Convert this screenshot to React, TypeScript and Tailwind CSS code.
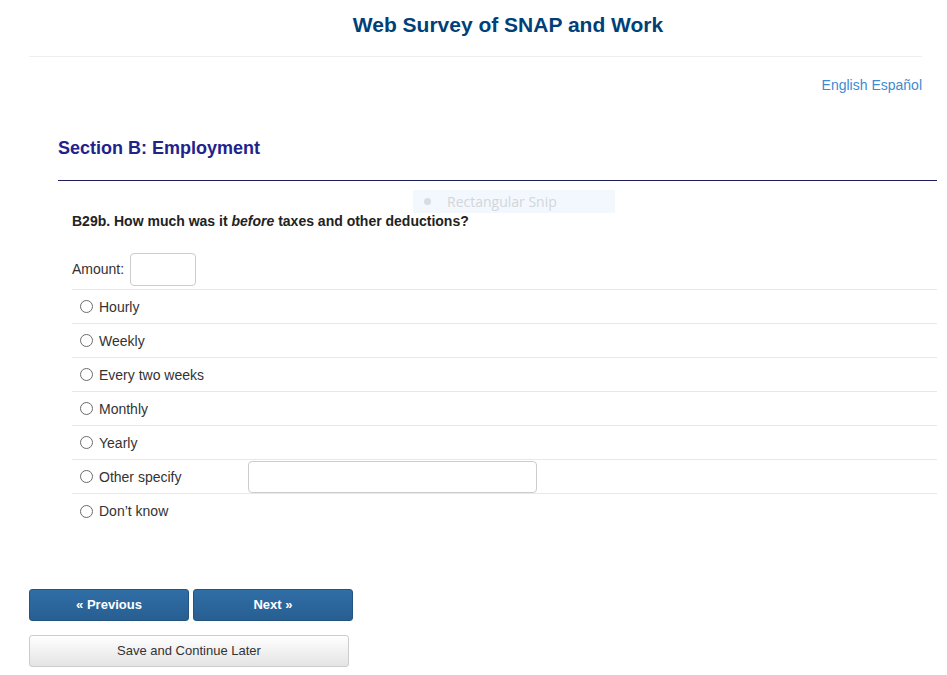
const options = ["Hourly", "Weekly", "Every two weeks", "Monthly", "Yearly", "Other specify", "Don’t know"];

function Radio() {
  return <span className="inline-block w-[13px] h-[13px] rounded-full border border-[#6b6b6b] bg-white shrink-0" />;
}

export default function App() {
  return (
    <div className="relative min-h-[675px] bg-white text-[14px] text-[#333] font-['Liberation_Sans',Arial,sans-serif]">
      {/* Header */}
      <div className="pl-[69px] pt-[11px] text-center">
        <h1 className="text-[21px] leading-[28px] font-bold text-[#003f78]">Web Survey of SNAP and Work</h1>
      </div>
      <div className="mx-[29px] mt-[17px] mr-[25px] border-t border-[#eeeeee]" />

      <div className="mr-[25px] mt-[18px] text-right leading-[20px] text-[#3f8ad0]">
        <a href="#">English</a> <a href="#">Español</a>
      </div>

      {/* Section */}
      <div className="ml-[58px] mr-[10px] mt-[41px]">
        <h2 className="text-[18px] leading-[24px] font-bold text-[#22228c]">Section B: Employment</h2>
        <div className="mt-[20px] border-t border-[#1e1e5a]" />

        <div className="ml-[14px] mt-[30px]">
          <p className="font-bold text-[#222] leading-[20px]">
            B29b. How much was it <em>before</em> taxes and other deductions?
          </p>

          <div className="mt-[22px] flex items-center h-[37px] pb-[4px] border-b border-[#e8e8e8]">
            <span className="leading-[20px]">Amount:</span>
            <input className="ml-[6px] w-[66px] h-[33px] rounded-[4px] border border-[#cccccc] bg-white" />
          </div>

          {options.map((o, i) => (
            <div
              key={o}
              className={`flex items-center h-[34px] pl-[8px] ${i < options.length - 1 ? "border-b border-[#e8e8e8]" : ""}`}
            >
              <Radio />
              <span className="ml-[6px] leading-[20px] w-[149px]">{o}</span>
              {o === "Other specify" && (
                <input className="w-[289px] h-[32px] rounded-[4px] border border-[#cccccc] bg-white" />
              )}
            </div>
          ))}
        </div>
      </div>

      {/* Buttons */}
      <div className="ml-[29px] mt-[61px] flex gap-[4px]">
        <button className="w-[160px] h-[32px] rounded-[3px] border border-[#245580] bg-gradient-to-b from-[#2f6ea6] to-[#285f91] text-white text-[13px] font-bold">
          « Previous
        </button>
        <button className="w-[160px] h-[32px] rounded-[3px] border border-[#245580] bg-gradient-to-b from-[#2f6ea6] to-[#285f91] text-white text-[13px] font-bold">
          Next »
        </button>
      </div>
      <div className="ml-[29px] mt-[14px]">
        <button className="w-[320px] h-[32px] rounded-[3px] border border-[#cccccc] bg-gradient-to-b from-white to-[#e4e4e4] text-[#333] text-[13px]">
          Save and Continue Later
        </button>
      </div>

      {/* Snip overlay */}
      <div className="absolute left-[413px] top-[190px] w-[202px] h-[23px] bg-[#f3f8fe] flex items-center font-['Open_Sans',sans-serif] text-[14px] text-[#d2d6da]">
        <span className="ml-[11px] w-[7px] h-[7px] rounded-full bg-[#d8dce0]" />
        <span className="ml-[16px]">Rectangular Snip</span>
      </div>
    </div>
  );
}
